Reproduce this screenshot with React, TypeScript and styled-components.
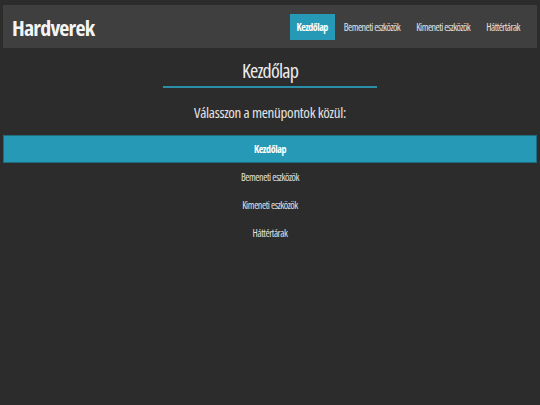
import React, { useState } from 'react';
import styled, { createGlobalStyle } from 'styled-components';

const GlobalStyle = createGlobalStyle`
  html, body {
    margin: 0;
    padding: 0;
    background-color: #2c2c2c;
  }
  body {
    font-family: "Open Sans", "Liberation Sans", Arial, sans-serif;
    font-stretch: 75%;
    color: #e6e6e6;
  }
`;

const Page = styled.div`
  padding: 5px 3px 0;
`;

const Header = styled.header`
  display: flex;
  align-items: center;
  justify-content: space-between;
  height: 43px;
  padding: 0 10px 0 9px;
  background-color: #3f3f3f;
`;

const Brand = styled.div`
  font-size: 22px;
  font-weight: 700;
  letter-spacing: -0.8px;
  color: #f4f4f4;
`;

const Nav = styled.nav`
  display: flex;
  align-items: center;
  gap: 2px;
`;

const NavItem = styled.a<{ $active: boolean }>`
  display: flex;
  align-items: center;
  height: 26px;
  padding: 0 7px;
  font-size: 10px;
  letter-spacing: -0.5px;
  font-weight: ${p => (p.$active ? 700 : 400)};
  color: ${p => (p.$active ? '#ffffff' : '#e2e2e2')};
  background-color: ${p => (p.$active ? '#2599b6' : 'transparent')};
  cursor: pointer;
  text-decoration: none;
`;

const Main = styled.main`
  display: flex;
  flex-direction: column;
  align-items: center;
`;

const Title = styled.h1`
  width: 40%;
  margin: 11px 0 0;
  padding-bottom: 3px;
  border-bottom: 2px solid #2a8ea8;
  font-size: 20px;
  line-height: 24px;
  font-weight: 400;
  letter-spacing: -0.8px;
  text-align: center;
  color: #ececec;
`;

const Subtitle = styled.h2`
  margin: 15px 0 0;
  font-size: 15px;
  line-height: 18px;
  font-weight: 400;
  letter-spacing: -0.3px;
  text-align: center;
  color: #e4e4e4;
`;

const Menu = styled.ul`
  align-self: stretch;
  list-style: none;
  margin: 14px 0 0;
  padding: 0;
`;

const MenuItem = styled.li<{ $active: boolean }>`
  display: flex;
  align-items: center;
  justify-content: center;
  box-sizing: border-box;
  height: 28px;
  font-size: 10px;
  letter-spacing: -0.4px;
  font-weight: ${p => (p.$active ? 700 : 400)};
  color: ${p => (p.$active ? '#ffffff' : '#e2e2e2')};
  background-color: ${p => (p.$active ? '#2599b6' : 'transparent')};
  border: 1px solid ${p => (p.$active ? '#1f6e80' : 'transparent')};
  cursor: pointer;
`;

const pages = ['Kezdőlap', 'Bemeneti eszközök', 'Kimeneti eszközök', 'Háttértárak'];

export default function App() {
  const [current, setCurrent] = useState(0);

  return (
    <>
      <GlobalStyle />
      <Page>
        <Header>
          <Brand>Hardverek</Brand>
          <Nav>
            {pages.map((p, i) => (
              <NavItem key={p} $active={i === current} onClick={() => setCurrent(i)}>
                {p}
              </NavItem>
            ))}
          </Nav>
        </Header>
        <Main>
          <Title>{pages[current]}</Title>
          <Subtitle>Válasszon a menüpontok közül:</Subtitle>
          <Menu>
            {pages.map((p, i) => (
              <MenuItem key={p} $active={i === current} onClick={() => setCurrent(i)}>
                {p}
              </MenuItem>
            ))}
          </Menu>
        </Main>
      </Page>
    </>
  );
}
